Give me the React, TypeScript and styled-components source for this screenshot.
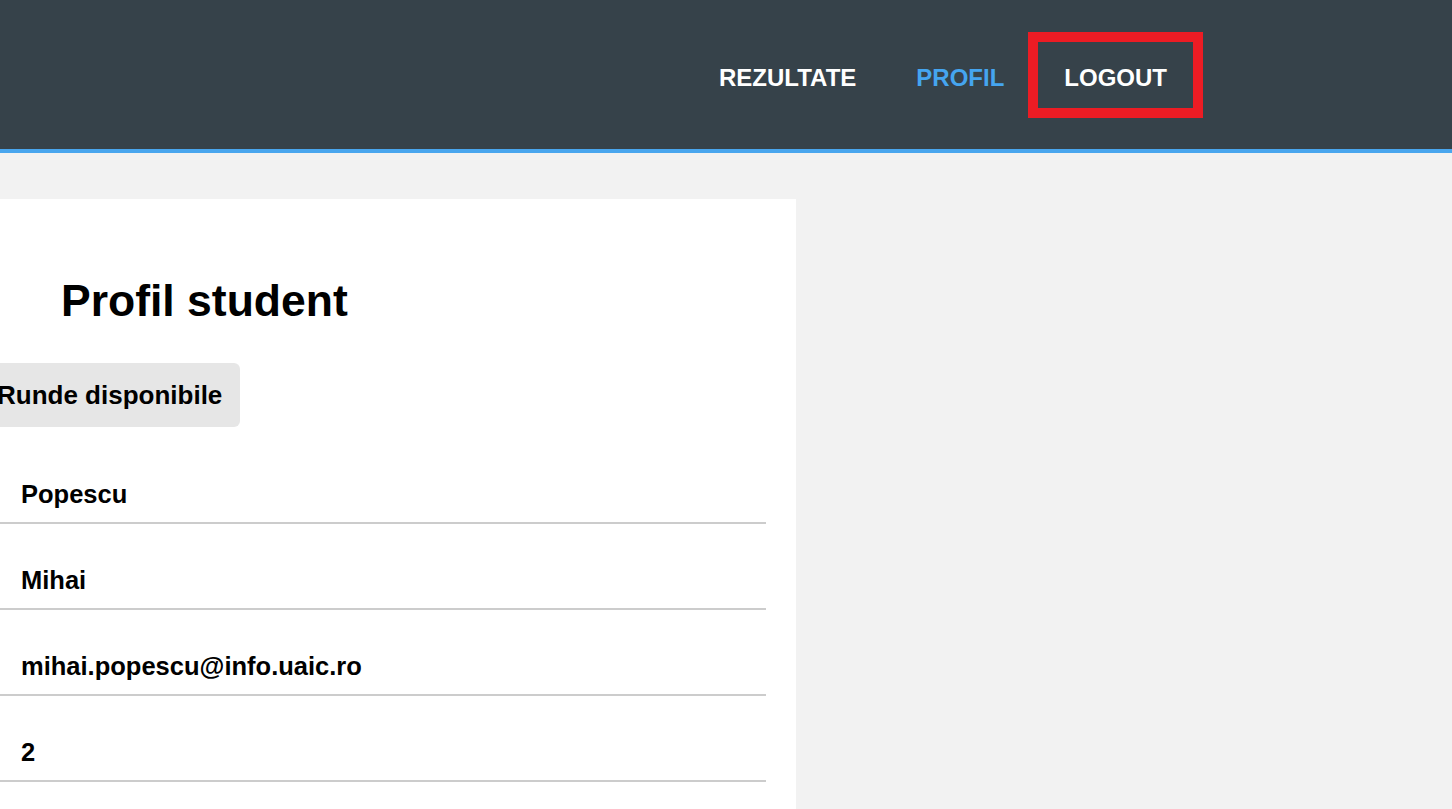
import React from "react";
import styled, { createGlobalStyle } from "styled-components";

const GlobalStyle = createGlobalStyle`
  html, body {
    margin: 0;
    padding: 0;
    background: #f2f2f2;
    overflow: hidden;
    font-family: "Liberation Sans", Arial, sans-serif;
  }
  * { box-sizing: border-box; }
`;

const Header = styled.header`
  height: 153px;
  background: #36424a;
  border-bottom: 4px solid #49a6ee;
  display: flex;
  align-items: center;
  justify-content: flex-end;
  padding: 0 259px 0 0;
`;

const Nav = styled.nav`
  display: flex;
  align-items: center;
  gap: 8px;
`;

const NavLink = styled.a<{ $active?: boolean; $marked?: boolean }>`
  display: block;
  height: 66px;
  line-height: 61px;
  padding: 5px 26px 0;
  font-size: 24px;
  font-weight: 700;
  color: ${(p) => (p.$active ? "#45a5f0" : "#ffffff")};
  text-decoration: none;
  outline: ${(p) => (p.$marked ? "10px solid #ec1c24" : "none")};
`;

const Main = styled.main`
  padding-top: 46px;
  display: flex;
`;

const Card = styled.section`
  margin-left: -51px;
  width: 847px;
  min-height: 700px;
  background: #ffffff;
  padding: 76px 30px 0 30px;
  display: flex;
  flex-direction: column;
  align-items: flex-start;
`;

const Title = styled.h1`
  margin: 0 0 37px 0;
  padding-left: 82px;
  font-size: 44.5px;
  font-weight: 700;
  line-height: 51px;
  color: #000;
`;

const RoundsButton = styled.button`
  font-family: "Liberation Sans", Arial, sans-serif;
  font-size: 26px;
  font-weight: 700;
  line-height: 30px;
  color: #000;
  background: #e6e6e6;
  border: none;
  border-radius: 6px;
  padding: 17px 18px;
  margin-bottom: 11px;
  cursor: pointer;
`;

const InfoList = styled.div`
  align-self: stretch;
  display: flex;
  flex-direction: column;
`;

const InfoRow = styled.div`
  padding: 41px 0 13px 42px;
  font-size: 25.5px;
  line-height: 30px;
  font-weight: 700;
  color: #000;
  border-bottom: 2px solid #cccccc;
`;

const rows = ["Popescu", "Mihai", "mihai.popescu@info.uaic.ro", "2"];

export default function App() {
  return (
    <>
      <GlobalStyle />
      <Header>
        <Nav>
          <NavLink href="#">REZULTATE</NavLink>
          <NavLink href="#" $active>
            PROFIL
          </NavLink>
          <NavLink href="#" $marked>
            LOGOUT
          </NavLink>
        </Nav>
      </Header>
      <Main>
        <Card>
          <Title>Profil student</Title>
          <RoundsButton>Runde disponibile</RoundsButton>
          <InfoList>
            {rows.map((r) => (
              <InfoRow key={r}>{r}</InfoRow>
            ))}
          </InfoList>
        </Card>
      </Main>
    </>
  );
}
